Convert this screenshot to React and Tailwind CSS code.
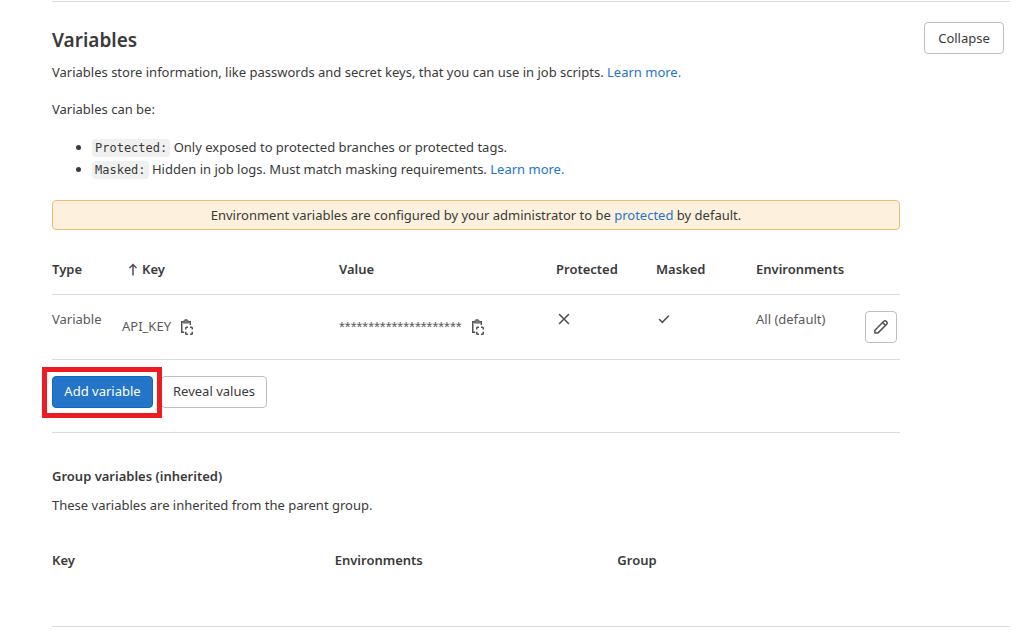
import React from 'react';

const variables = [
  {
    type: 'Variable',
    key: 'API_KEY',
    value: '*********************',
    isProtected: false,
    isMasked: true,
    environments: 'All (default)',
  },
];

const buttonClass =
  'h-8 shrink-0 whitespace-nowrap rounded border border-[#bfbfbf] bg-white text-[#3a3a3a]';

const linkClass = 'text-[#1f75cb] hover:underline';

const codeClass =
  "rounded bg-[#f0f0f0] px-[3px] py-0.5 font-['DejaVu_Sans_Mono',monospace] text-xs leading-none";

const ArrowUpIcon = () => (
  <svg className="h-4 w-4 shrink-0" viewBox="0 0 16 16" fill="none" stroke="#525252" strokeWidth="1.5">
    <path d="M8 13.5V3M4.5 6 8 2.5 11.5 6" />
  </svg>
);

const CopyIcon = () => (
  <svg className="h-4 w-4" viewBox="0 0 16 16" fill="none" stroke="#525252" strokeWidth="1.5">
    <path d="M5.2 13.25H2.75V2.75H4.5M9.5 2.75h1.75V6" />
    <path d="M4.9 3.9V2.2h1.3V.8h1.6v1.4h1.3v1.7z" strokeWidth="1.3" />
    <path d="M9 8.25H7.5q-.75 0-.75.75v1.5M11 8.25h1.5q.75 0 .75.75v1.5M9 15.25H7.5q-.75 0-.75-.75V12.7M11 15.25h1.5q.75 0 .75-.75V12.7" />
  </svg>
);

const CloseIcon = () => (
  <svg className="h-4 w-4" viewBox="0 0 16 16" fill="none" stroke="#525252" strokeWidth="1.6" strokeLinecap="round">
    <path d="m3.5 3.5 9 9M12.5 3.5l-9 9" />
  </svg>
);

const CheckIcon = () => (
  <svg className="h-4 w-4" viewBox="0 0 16 16" fill="none" stroke="#525252" strokeWidth="1.6" strokeLinecap="round">
    <path d="m3.5 8.5 2.8 2.8 6.2-6.3" />
  </svg>
);

const PencilIcon = () => (
  <svg className="h-4 w-4" viewBox="0 0 16 16" fill="none" stroke="#525252" strokeWidth="1.5" strokeLinejoin="round">
    <path d="M1.9 14.1v-2.9l8.9-8.9a1.6 1.6 0 0 1 2.3 0l.6.6a1.6 1.6 0 0 1 0 2.3l-8.9 8.9z" />
    <path d="m9.7 3.6 2.7 2.7" />
  </svg>
);

const VariablesTable = () => (
  <table className="mt-4 w-full table-fixed text-left">
    <colgroup>
      <col className="w-[70px]" />
      <col />
      <col />
      <col className="w-[100px]" />
      <col className="w-[100px]" />
      <col className="w-[100px]" />
      <col className="w-11" />
    </colgroup>
    <thead>
      <tr className="h-12 border-b border-[#dbdbdb]">
        <th className="font-semibold">Type</th>
        <th className="font-semibold">
          <span className="flex items-center gap-px pl-[3px]">
            <ArrowUpIcon />
            Key
          </span>
        </th>
        <th className="font-semibold">Value</th>
        <th className="font-semibold">Protected</th>
        <th className="font-semibold">Masked</th>
        <th className="font-semibold">Environments</th>
        <th aria-label="Actions"></th>
      </tr>
    </thead>
    <tbody>
      {variables.map((item) => (
        <tr key={item.key} className="border-b border-[#dbdbdb] align-top text-[#5a5a5a]">
          <td className="py-3.5">{item.type}</td>
          <td className="py-4">
            <div className="flex h-8 items-center gap-2">
              {item.key}
              <button type="button" aria-label="Copy key">
                <CopyIcon />
              </button>
            </div>
          </td>
          <td className="py-4">
            <div className="flex h-8 items-center gap-2">
              <span className="font-['Liberation_Sans',sans-serif] text-[15px]">{item.value}</span>
              <button type="button" aria-label="Copy value">
                <CopyIcon />
              </button>
            </div>
          </td>
          <td className="py-4">{item.isProtected ? <CheckIcon /> : <CloseIcon />}</td>
          <td className="py-4">{item.isMasked ? <CheckIcon /> : <CloseIcon />}</td>
          <td className="whitespace-nowrap py-3.5">{item.environments}</td>
          <td className="py-4 pr-[3px]">
            <button
              type="button"
              aria-label="Edit"
              className="ml-auto flex h-8 w-8 items-center justify-center rounded border border-[#bfbfbf] bg-white"
            >
              <PencilIcon />
            </button>
          </td>
        </tr>
      ))}
    </tbody>
  </table>
);

const GroupVariables = () => (
  <section className="mt-6 border-t border-[#dbdbdb] pt-8">
    <h3 className="font-semibold leading-[22px]">Group variables (inherited)</h3>
    <p className="mt-2">These variables are inherited from the parent group.</p>
    <table className="mt-6 w-full table-fixed text-left">
      <thead>
        <tr className="h-[42px]">
          <th className="font-semibold">Key</th>
          <th className="font-semibold">Environments</th>
          <th className="font-semibold">Group</th>
        </tr>
      </thead>
    </table>
  </section>
);

const App = () => {
  return (
    <div className="bg-white pl-[52px] pr-[17px] pt-px font-['Noto_Sans','Open_Sans',sans-serif] text-[13px] leading-[21px] text-[#3a3a3a]">
      <main className="border-y border-[#dbdbdb] pb-11 pr-[6px] pt-5">
        <div className="flex items-start gap-6">
          <div className="min-w-0 flex-1">
            <h2 className="pt-1 text-[19px] font-semibold leading-7">Variables</h2>
            <p className="mt-2">
              Variables store information, like passwords and secret keys, that you can use in job scripts.{' '}
              <a href="#" className={linkClass}>Learn more.</a>
            </p>
            <p className="mt-4">Variables can be:</p>
            <ul className="mt-4 list-disc pl-10 leading-[22px]">
              <li>
                <code className={codeClass}>Protected:</code>{' '}
                Only exposed to protected branches or protected tags.
              </li>
              <li>
                <code className={codeClass}>Masked:</code>{' '}
                Hidden in job logs. Must match masking requirements.{' '}
                <a href="#" className={linkClass}>Learn more.</a>
              </li>
            </ul>

            <div className="mt-5 rounded border border-[#e9be74] bg-[#fdf1dd] py-[3px] text-center leading-[22px]">
              Environment variables are configured by your administrator to be{' '}
              <a href="#" className={linkClass}>protected</a> by default.
            </div>

            <VariablesTable />

            <div className="mt-4 flex gap-2">
              <div className="relative z-10">
                <button
                  type="button"
                  className="h-8 w-[101px] whitespace-nowrap rounded border border-[#1068bf] bg-[#2475ca] text-white"
                >
                  Add variable
                </button>
                {/* Highlight frame */}
                <div className="pointer-events-none absolute -bottom-2.5 -left-2.5 -right-[9px] -top-[9px] border-[5px] border-[#ed1c24]"></div>
              </div>
              <button type="button" className={`${buttonClass} w-[106px]`}>Reveal values</button>
            </div>

            <GroupVariables />
          </div>
          <button type="button" className={`${buttonClass} w-20`}>Collapse</button>
        </div>
      </main>
    </div>
  );
};

export default App;
